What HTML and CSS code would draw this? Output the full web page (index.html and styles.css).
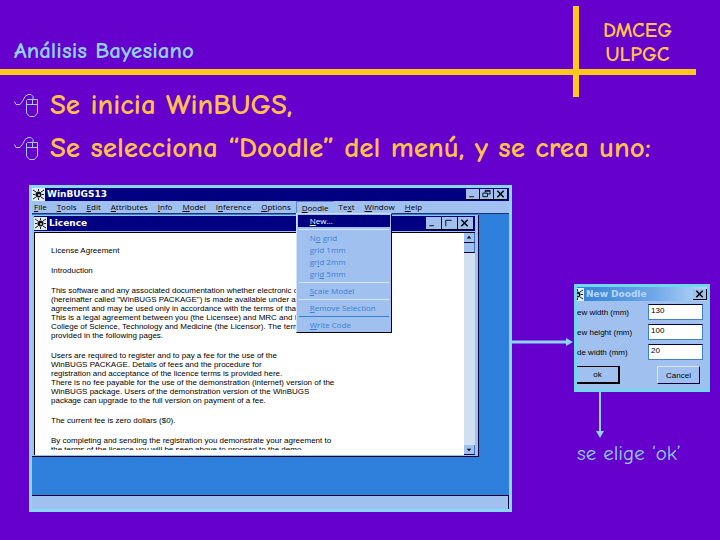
FILE: index.html
```html
<!DOCTYPE html>
<html lang="es">

<head>
    <meta charset="UTF-8">
    <meta name="viewport" content="width=device-width, initial-scale=1.0">
    <title>Análisis Bayesiano</title>
    <link rel="stylesheet" href="styles.css">
</head>

<body>
    <svg class="defs" width="0" height="0">
        <symbol id="mouse" viewBox="0 0 24 24">
            <path d="M.5 8.500 2 11.500H6L9 7.500 11 3.500 14 1.500H17L19 3.500V6M13.500 6.500H23.500V20L20.500 23.500H15.500L12.500 20V7.500ZM12.500 11.500H23.500M18.500 6.500V11.500" />
        </symbol>
        <symbol id="bug" viewBox="0 0 13 13">
            <rect width="13" height="13" fill="#e4ecf4" />
            <path d="M1 2 4 4M1 6.500H3M1 11 4 9M6.500 1V3M12 2 9 4M12 6.500H10M12 11 9 9M6.500 12V10" stroke="#222" fill="none" />
            <circle cx="6.500" cy="6.500" r="3" fill="#111" />
            <path d="M6 6H8V8H6Z" fill="#9ab" />
        </symbol>
    </svg>

    <header class="header">
        <h1>Análisis Bayesiano</h1>
        <div class="brand">DMCEG<br>ULPGC</div>
    </header>

    <main>
        <ul class="steps">
            <li><svg class="mouse"><use href="#mouse" /></svg>Se inicia WinBUGS,</li>
            <li><svg class="mouse"><use href="#mouse" /></svg>Se selecciona “Doodle” del menú, y se crea uno:</li>
        </ul>

        <div class="figure">
            <section class="window">
                <div class="titlebar">
                    <svg class="bug"><use href="#bug" /></svg>
                    <span class="title">WinBUGS13</span>
                    <button class="winbtn" aria-label="Minimizar"><svg viewBox="0 0 13 11"><path d="M3 8.500H8" /></svg></button>
                    <button class="winbtn" aria-label="Restaurar"><svg viewBox="0 0 13 11"><path d="M5 4V1.500H10.500V5.500H8M2.500 4.500H7.500V8.500H2.500ZM5 2.500H10" /></svg></button>
                    <button class="winbtn" aria-label="Cerrar"><svg viewBox="0 0 13 11"><path d="M3 2 10 9M10 2 3 9" stroke-width="1.600" /></svg></button>
                </div>
                <nav class="menubar">
                    <button><u>F</u>ile</button>
                    <button><u>T</u>ools</button>
                    <button><u>E</u>dit</button>
                    <button><u>A</u>ttributes</button>
                    <button><u>I</u>nfo</button>
                    <button><u>M</u>odel</button>
                    <button>I<u>n</u>ference</button>
                    <button><u>O</u>ptions</button>
                    <div class="dropdown">
                        <button class="open"><u>D</u>oodle</button>
                        <div class="menu">
                            <button class="selected"><u>N</u>ew...</button>
                            <hr>
                            <button>N<u>o</u> grid</button>
                            <button><u>g</u>rid 1mm</button>
                            <button>gr<u>i</u>d 2mm</button>
                            <button>gri<u>d</u> 5mm</button>
                            <hr>
                            <button><u>S</u>cale Model</button>
                            <hr>
                            <button><u>R</u>emove Selection</button>
                            <hr class="dark">
                            <button><u>W</u>rite Code</button>
                        </div>
                    </div>
                    <button>Te<u>x</u>t</button>
                    <button><u>W</u>indow</button>
                    <button><u>H</u>elp</button>
                </nav>
                <div class="desktop">
                    <section class="licence">
                        <div class="titlebar">
                            <svg class="bug"><use href="#bug" /></svg>
                            <span class="title">Licence</span>
                            <button class="winbtn" aria-label="Minimizar"><svg viewBox="0 0 13 11"><path d="M3 8.500H8" /></svg></button>
                            <button class="winbtn" aria-label="Maximizar"><svg viewBox="0 0 13 11"><path d="M3.500 9V2.500H10" /></svg></button>
                            <button class="winbtn" aria-label="Cerrar"><svg viewBox="0 0 13 11"><path d="M3 2 10 9M10 2 3 9" stroke-width="1.600" /></svg></button>
                        </div>
                        <div class="pane">
                            <div class="document">
                                <p>License Agreement</p>
                                <p>Introduction</p>
                                <p>This software and any associated documentation whether electronic or<br>
                                    (hereinafter called "WinBUGS PACKAGE") is made available under a<br>
                                    agreement and may be used only in accordance with the terms of that<br>
                                    This is a legal agreement between you (the Licensee) and MRC and Im<br>
                                    College of Science, Technology and Medicine (the Licensor). The terms<br>
                                    provided in the following pages.</p>
                                <p>Users are required to register and to pay a fee for the use of the<br>
                                    WinBUGS PACKAGE. Details of fees and the procedure for<br>
                                    registration and acceptance of the licence terms is provided here.<br>
                                    There is no fee payable for the use of the demonstration (internet) version of the<br>
                                    WinBUGS package. Users of the demonstration version of the WinBUGS<br>
                                    package can upgrade to the full version on payment of a fee.</p>
                                <p>The current fee is zero dollars ($0).</p>
                                <p>By completing and sending the registration you demonstrate your agreement to<br>
                                    the terms of the licence you will be seen above to proceed to the demo</p>
                            </div>
                            <div class="scrollbar">
                                <button aria-label="Subir"><svg viewBox="0 0 11 10"><path d="M3 6H8L5.500 3Z" /></svg></button>
                                <div class="thumb"></div>
                                <button class="down" aria-label="Bajar"><svg viewBox="0 0 11 10"><path d="M3 4H8L5.500 7Z" /></svg></button>
                            </div>
                        </div>
                    </section>
                </div>
                <div class="statusbar"></div>
            </section>

            <svg class="arrow-right" viewBox="0 0 62 8">
                <path d="M0 2.500H56V5.500H0ZM54 0 61 4 54 8Z" />
            </svg>

            <div class="side">
                <form class="dialog">
                    <div class="dialog-title">
                        <svg class="bug" viewBox="6 0 7 13"><use href="#bug" width="13" height="13" /></svg>
                        <span class="title">New Doodle</span>
                        <button type="button" class="winbtn" aria-label="Cerrar"><svg viewBox="0 0 13 11"><path d="M3 2 10 9M10 2 3 9" stroke-width="1.600" /></svg></button>
                    </div>
                    <div class="field"><label for="width">ew width (mm)</label><input type="text" id="width" value="130"></div>
                    <div class="field"><label for="height">ew height (mm)</label><input type="text" id="height" value="100"></div>
                    <div class="field"><label for="node">de width (mm)</label><input type="text" id="node" value="20"></div>
                    <div class="buttons">
                        <button type="button" class="ok">ok</button>
                        <button type="button" class="cancel">Cancel</button>
                    </div>
                </form>
                <svg class="arrow-down" viewBox="0 0 8 46">
                    <path d="M3 0H5V40H3ZM0 39H8L4 46Z" />
                </svg>
                <p class="caption">se elige ‘ok’</p>
            </div>
        </div>
    </main>
</body>

</html>
```
FILE: styles.css
```css
* {
    box-sizing: border-box;
    margin: 0;
    padding: 0;
}

body {
    background-color: #6600cc;
    color: #ffc04c;
    font-family: "Comic Sans MS", "Comic Neue", "Open Sans", sans-serif;
}

button {
    font: inherit;
    color: inherit;
    background: none;
    border: none;
}

svg {
    display: block;
    flex-shrink: 0;
}

.defs {
    position: absolute;
}

/* header with the crossing bars */
.header {
    display: flex;
    justify-content: space-between;
    align-items: flex-end;
    height: 75px;
    margin-right: 24px;
    border-bottom: 6px solid #ffc61c;
}

.header h1 {
    padding: 0 0 4px 14px;
    color: #8fd3ff;
    font-size: 23px;
    line-height: 28px;
}

.brand {
    position: relative;
    width: 123px;
    padding: 0 0 3px 6px;
    text-align: center;
    font-size: 21px;
    font-weight: bold;
    line-height: 24px;
}

.brand::before {
    content: "";
    position: absolute;
    left: 0;
    top: -12px;
    bottom: -28px;
    width: 6px;
    background-color: #ffc61c;
}

.steps {
    padding: 8px 0 0 14px;
    list-style: none;
    font-size: 29px;
    font-weight: bold;
    line-height: 43px;
}

.steps li {
    display: flex;
    align-items: center;
    gap: 12px;
}

.mouse {
    width: 24px;
    height: 24px;
    fill: none;
    stroke: #a8c8ff;
}

.figure {
    display: flex;
    align-items: flex-start;
    padding: 16px 10px 28px 29px;
}

/* windows */
.window {
    flex: 1;
    min-width: 0;
    border: 3px solid #87d7fb;
    background-color: #a0c0f0;
    color: #000;
    font-family: "Open Sans", sans-serif;
    font-size: 8px;
}

.titlebar {
    display: flex;
    align-items: center;
    height: 13px;
    padding-right: 1px;
    background-color: #000080;
    color: #fff;
}

.bug {
    width: 13px;
    height: 13px;
}

.title {
    flex: 1;
    padding-left: 2px;
    font-family: "DejaVu Sans", sans-serif;
    font-size: 9px;
    font-weight: bold;
    line-height: 13px;
}

.winbtn {
    width: 14px;
    height: 11px;
    background-color: #a0c0f0;
    border-right: 1px solid #000;
    border-bottom: 1px solid #000;
}

.winbtn svg {
    width: 13px;
    height: 10px;
    fill: none;
    stroke: #000;
}

.menubar {
    display: flex;
    gap: 10px;
    height: 13px;
    padding-left: 2px;
    line-height: 12px;
    border-bottom: 1px solid #203070;
}

.dropdown {
    position: relative;
}

.menubar .open {
    height: 12px;
    margin: 0 -5px;
    padding: 0 5px;
    border-top: 1px solid #6088c8;
    border-left: 1px solid #6088c8;
    line-height: 10px;
}

.menu {
    position: absolute;
    z-index: 1;
    top: 12px;
    left: -5px;
    width: 96px;
    padding: 1px;
    background-color: #a0c0f0;
    border: 1px solid #000;
    border-top-color: #d0e0ff;
    border-left-color: #d0e0ff;
}

.menu button {
    display: block;
    width: 100%;
    padding-left: 12px;
    color: #3c80d0;
    text-align: left;
    line-height: 12px;
}

.menu .selected {
    background-color: #000080;
    color: #fff;
}

.menu hr {
    margin: 2px 1px;
    border: none;
    border-top: 1px solid #d8e8ff;
}

.menu .dark {
    border-color: #3c80d0;
}

.desktop {
    padding: 1px 30px 38px 0;
    background-color: #2e80dc;
}

.licence {
    padding: 1px 3px 1px 2px;
    background-color: #a0c0f0;
    border-right: 1px solid #000030;
    border-bottom: 1px solid #000030;
}

.licence .titlebar {
    height: 15px;
}

.licence .winbtn {
    width: 16px;
    height: 13px;
}

.pane {
    display: flex;
    height: 223px;
    margin-top: 1px;
    background-color: #fff;
    border-top: 1px solid #000;
    border-left: 1px solid #000;
}

.document {
    flex: 1;
    height: 217px;
    padding: 13px 0 0 16px;
    overflow: hidden;
    white-space: nowrap;
    font-family: "Liberation Sans", Arial, sans-serif;
    line-height: 9px;
}

.document p {
    margin-bottom: 11px;
}

.scrollbar {
    display: flex;
    flex-direction: column;
    width: 11px;
    background-color: #d0e0f0;
}

.scrollbar button,
.thumb {
    height: 10px;
    background-color: #a0c0f0;
    border-right: 1px solid #4070b0;
    border-bottom: 1px solid #000030;
}

.scrollbar .down {
    margin-top: auto;
}

.statusbar {
    height: 14px;
    border-top: 1px solid #000030;
    border-right: 1px solid #000030;
}

/* arrows and the dialog on the right */
.arrow-right {
    width: 62px;
    height: 8px;
    margin-top: 153px;
    fill: #8fd3ff;
}

.side {
    width: 136px;
    padding-top: 99px;
}

.dialog {
    border: 3px solid #70d8f0;
    padding-bottom: 5px;
    background-color: #a0c0f0;
    color: #000;
    font-family: "Liberation Sans", Arial, sans-serif;
    font-size: 8px;
}

.dialog-title {
    display: flex;
    align-items: center;
    height: 14px;
    margin-bottom: 3px;
    background: linear-gradient(to right, #3080d8, #70a8e8 60%, #b8d8f8);
    color: #b8d8ff;
}

.dialog-title .bug {
    width: 7px;
}

.field {
    display: flex;
    align-items: center;
    justify-content: space-between;
    margin: 0 4px 4px 0;
}

.field input {
    width: 55px;
    height: 16px;
    padding: 0 2px 3px;
    background-color: #fff;
    border: 1px solid #4080d0;
    border-top-color: #000040;
    font: inherit;
}

.buttons {
    display: flex;
    justify-content: space-between;
    padding: 2px 7px 0 0;
}

.buttons button {
    width: 43px;
    height: 18px;
    border: 1px solid #d8e8ff;
    border-right-color: #000040;
    border-bottom-color: #000040;
}

.buttons .ok {
    border: 1px solid #000;
    border-left: none;
    border-right-width: 2px;
    border-bottom-width: 2px;
}

.arrow-down {
    width: 8px;
    height: 46px;
    margin-left: 22px;
    fill: #8fd3ff;
}

.caption {
    padding-left: 3px;
    color: #8fd3ff;
    font-size: 21px;
    line-height: 30px;
}
```
